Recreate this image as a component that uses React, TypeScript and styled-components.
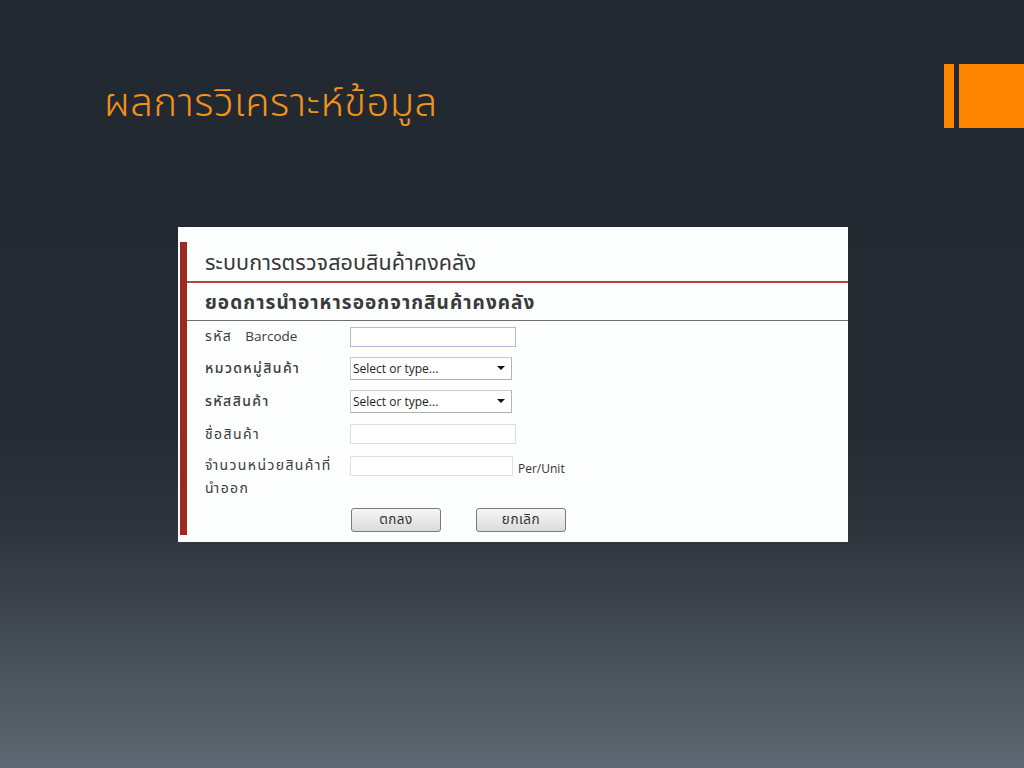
import React from "react";
import styled, { createGlobalStyle } from "styled-components";

const Global = createGlobalStyle`
  html, body { margin: 0; padding: 0; }
  body { width: 1024px; height: 768px; overflow: hidden; }
`;

const Slide = styled.div`
  width: 1024px;
  height: 768px;
  display: flex;
  flex-direction: column;
  background: linear-gradient(
    to bottom,
    #22282f 0%,
    #242a31 55%,
    #2e353d 70%,
    #5f6872 100%
  );
  font-family: "Noto Sans Thai", "Noto Sans", "DejaVu Sans", sans-serif;
`;

const Header = styled.div`
  display: flex;
  justify-content: space-between;
  align-items: flex-start;
  padding-top: 64px;
  padding-left: 104px;
  height: 64px;
`;

const Title = styled.h1`
  margin: 0;
  margin-top: 13px;
  font-size: 40px;
  line-height: 54px;
  font-weight: 300;
  color: #f3921b;
  letter-spacing: 0.5px;
`;

const Deco = styled.div`
  display: flex;
  gap: 5px;
`;

const DecoBar = styled.div<{ $w: number }>`
  width: ${(p) => p.$w}px;
  height: 64px;
  background: #ff8700;
`;

const Shot = styled.div`
  margin-top: 99px;
  margin-left: 178px;
  width: 670px;
  height: 315px;
  background: #fdfefe;
  display: flex;
  align-items: stretch;
`;

const RedBar = styled.div`
  width: 7px;
  margin-left: 2px;
  margin-top: 15px;
  margin-bottom: 7px;
  background: #9c2a20;
`;

const ShotBody = styled.div`
  flex: 1;
  display: flex;
  flex-direction: column;
  padding-top: 15px;
`;

const H1 = styled.div`
  display: flex;
  align-items: center;
  padding-left: 18px;
  padding-top: 4px;
  font-size: 21.5px;
  letter-spacing: 0.1px;
  color: #363636;
  border-bottom: 2px solid #ad463b;
  box-sizing: border-box;
  height: 41px;
`;

const H2 = styled.div`
  height: 38px;
  display: flex;
  align-items: center;
  padding-left: 18px;
  padding-top: 3px;
  font-size: 19px;
  font-weight: 700;
  letter-spacing: 1.05px;
  color: #3a3a3a;
  border-bottom: 1px solid #6e6e6e;
  box-sizing: border-box;
`;

const Form = styled.div`
  display: flex;
  flex-direction: column;
  padding-left: 18px;
`;

const Row = styled.div<{ $h: number; $top?: boolean }>`
  display: flex;
  align-items: ${(p) => (p.$top ? "flex-start" : "center")};
  height: ${(p) => p.$h}px;
`;

const Label = styled.div<{ $bold?: boolean; $pad?: number }>`
  width: 145px;
  flex-shrink: 0;
  font-size: 14px;
  letter-spacing: 1.4px;
  line-height: 23px;
  color: #3b3b3b;
  font-weight: ${(p) => (p.$bold ? 500 : 400)};
  padding-top: ${(p) => p.$pad ?? 0}px;
  box-sizing: border-box;
  white-space: nowrap;
`;

const Gap = styled.span`
  display: inline-block;
  width: 13px;
`;

const Latin = styled.span`
  font-family: "Open Sans", "Noto Sans", sans-serif;
  font-size: 13.5px;
  letter-spacing: 0;
`;

const TextBox = styled.div<{ $w: number; $border: string; $mt?: number }>`
  width: ${(p) => p.$w}px;
  height: 20px;
  box-sizing: border-box;
  border: 1px solid ${(p) => p.$border};
  background: #fff;
  margin-top: ${(p) => p.$mt ?? 0}px;
`;

const Select = styled.div`
  width: 162px;
  height: 23px;
  box-sizing: border-box;
  border: 1px solid #c8c8c8;
  border-bottom-color: #b0b0b0;
  border-right-color: #b4b4b4;
  background: #fff;
  display: flex;
  align-items: center;
  justify-content: space-between;
  padding: 0 6px 0 2px;
  font-family: "Open Sans", "Noto Sans", sans-serif;
  font-size: 12px;
  color: #222;
`;

const Arrow = styled.span`
  width: 0;
  height: 0;
  border-left: 4px solid transparent;
  border-right: 4px solid transparent;
  border-top: 4px solid #111;
`;

const Unit = styled.div`
  margin-left: 5px;
  margin-top: 10px;
  font-family: "Open Sans", "Noto Sans", sans-serif;
  font-size: 12px;
  color: #333;
`;

const Buttons = styled.div`
  display: flex;
  gap: 35px;
  margin-left: 146px;
  margin-top: 8px;
`;

const Button = styled.div`
  width: 90px;
  height: 24px;
  box-sizing: border-box;
  border: 1px solid #7a7a7a;
  border-radius: 3px;
  background: linear-gradient(to bottom, #f6f6f6 0%, #e9e9e9 50%, #dadada 100%);
  display: flex;
  align-items: center;
  justify-content: center;
  font-size: 13.5px;
  letter-spacing: 0.5px;
  color: #333;
`;

export default function App() {
  return (
    <>
      <Global />
      <Slide>
        <Header>
          <Title>ผลการวิเคราะห์ข้อมูล</Title>
          <Deco>
            <DecoBar $w={10} />
            <DecoBar $w={65} />
          </Deco>
        </Header>
        <Shot>
          <RedBar />
          <ShotBody>
            <H1>ระบบการตรวจสอบสินค้าคงคลัง</H1>
            <H2>ยอดการนำอาหารออกจากสินค้าคงคลัง</H2>
            <Form>
              <Row $h={31}>
                <Label>
                  รหัส<Gap />
                  <Latin>Barcode</Latin>
                </Label>
                <TextBox $w={166} $border="#abbfd3" />
              </Row>
              <Row $h={32}>
                <Label $bold>หมวดหมู่สินค้า</Label>
                <Select>
                  Select or type...
                  <Arrow />
                </Select>
              </Row>
              <Row $h={34}>
                <Label $bold>รหัสสินค้า</Label>
                <Select>
                  Select or type...
                  <Arrow />
                </Select>
              </Row>
              <Row $h={32}>
                <Label>ชื่อสินค้า</Label>
                <TextBox $w={166} $border="#d9dee4" />
              </Row>
              <Row $h={50} $top>
                <Label $pad={4}>
                  จำนวนหน่วยสินค้าที่
                  <br />
                  นำออก
                </Label>
                <TextBox $w={163} $border="#dcdfe3" $mt={6} />
                <Unit>Per/Unit</Unit>
              </Row>
              <Buttons>
                <Button>ตกลง</Button>
                <Button>ยกเลิก</Button>
              </Buttons>
            </Form>
          </ShotBody>
        </Shot>
      </Slide>
    </>
  );
}
